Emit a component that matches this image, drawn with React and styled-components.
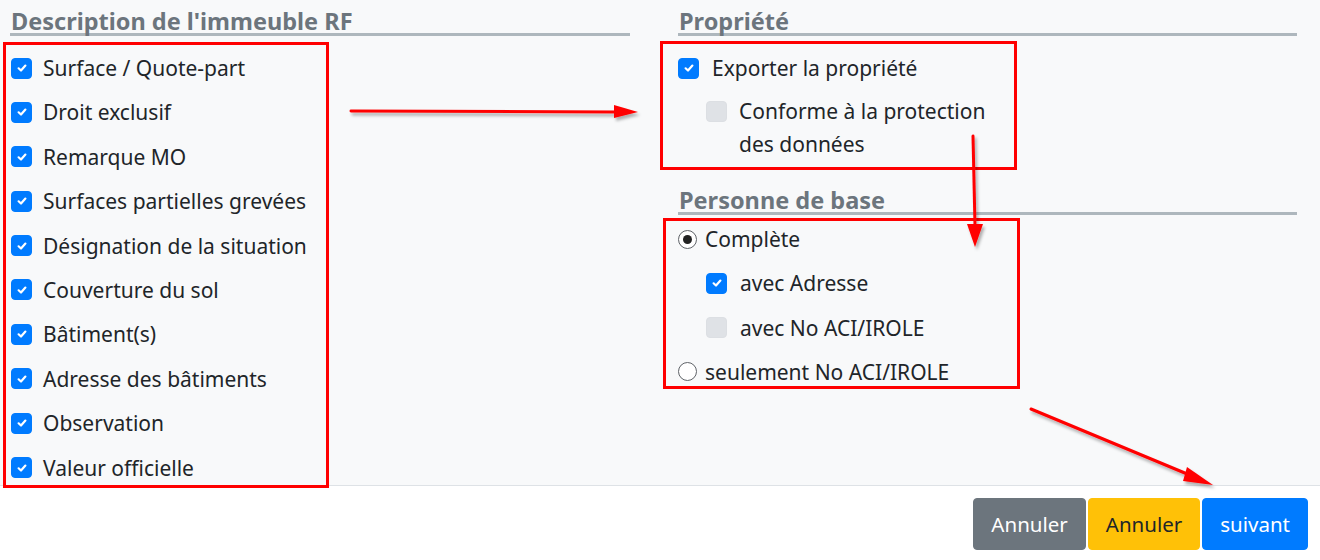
import styled, { createGlobalStyle } from "styled-components";

const GlobalStyle = createGlobalStyle`
  html, body {
    margin: 0;
    padding: 0;
    background: #ffffff;
    font-family: "Noto Sans", "Open Sans", Arial, sans-serif;
    color: #212529;
  }
`;

const LEFT_ITEMS = [
  "Surface / Quote-part",
  "Droit exclusif",
  "Remarque MO",
  "Surfaces partielles grevées",
  "Désignation de la situation",
  "Couverture du sol",
  "Bâtiment(s)",
  "Adresse des bâtiments",
  "Observation",
  "Valeur officielle",
];

const Check = ({ checked }) => (
  <CheckBox $checked={checked}>
    {checked && (
      <svg width="12" height="12" viewBox="0 0 12 12">
        <path d="M2.6 6.3 L5 8.5 L9.4 3.6" fill="none" stroke="#fff" strokeWidth="2.2" strokeLinecap="round" strokeLinejoin="round" />
      </svg>
    )}
  </CheckBox>
);

const App = () => {
  return (
    <>
      <GlobalStyle />
      <Page>
        <Main>
          <LeftColumn>
            <Heading $top={9}>Description de l'immeuble RF</Heading>
            <LeftBox>
              {LEFT_ITEMS.map((label) => (
                <Row key={label} $gap={11}>
                  <Check checked />
                  <Label>{label}</Label>
                </Row>
              ))}
            </LeftBox>
          </LeftColumn>

          <RightColumn>
            <Heading $top={9} $bottom={5}>Propriété</Heading>
            <RightBox $shift={18} $h={129} $pad="6px 15px 0 15px" $gap={9}>
              <Row $gap={13}>
                <Check checked />
                <Label>Exporter la propriété</Label>
              </Row>
              <SubRow>
                <Check />
                <WrapLabel>Conforme à la protection des données</WrapLabel>
              </SubRow>
            </RightBox>

            <Heading $top={18} $bottom={3}>Personne de base</Heading>
            <RightBox $shift={15} $h={171} $pad="0 12px" $gap={8.3}>
              <Row $gap={8}>
                <Radio $checked />
                <Label>Complète</Label>
              </Row>
              <Row $gap={13} $indent={28}>
                <Check checked />
                <Label>avec Adresse</Label>
              </Row>
              <Row $gap={13} $indent={28}>
                <Check />
                <Label>avec No ACI/IROLE</Label>
              </Row>
              <Row $gap={8}>
                <Radio />
                <Label>seulement No ACI/IROLE</Label>
              </Row>
            </RightBox>
          </RightColumn>

          <Arrows width="1320" height="560" viewBox="0 0 1320 560">
            <defs>
              <filter id="sh" x="-10%" y="-50%" width="120%" height="200%">
                <feDropShadow dx="2" dy="3" stdDeviation="1.5" floodColor="#000" floodOpacity="0.3" />
              </filter>
            </defs>
            <g filter="url(#sh)" fill="#ff0000" stroke="#ff0000">
              <line x1="351" y1="111" x2="616" y2="112" strokeWidth="3" strokeLinecap="round" />
              <polygon points="614,105 638,112 614,118" stroke="none" />
              <line x1="973" y1="136" x2="975" y2="226" strokeWidth="3" strokeLinecap="round" />
              <polygon points="967,224 983,224 975,247" stroke="none" />
              <line x1="1031" y1="409" x2="1192" y2="476" strokeWidth="3" strokeLinecap="round" />
              <polygon points="1187,467 1213,485 1183,481" stroke="none" />
            </g>
          </Arrows>
        </Main>

        <Footer>
          <Button $bg="#6c757d" $fg="#ffffff">Annuler</Button>
          <Button $bg="#ffc107" $fg="#212529">Annuler</Button>
          <Button $bg="#007bff" $fg="#ffffff">suivant</Button>
        </Footer>
      </Page>
    </>
  );
};

export default App;

// styles
const Page = styled.div`
  width: 1320px;
  height: 560px;
  display: flex;
  flex-direction: column;
  overflow: hidden;
`;

const Main = styled.div`
  position: relative;
  height: 486px;
  flex-shrink: 0;
  background: #f8f9fa;
  border-bottom: 1px solid #dee2e6;
  box-sizing: border-box;
  display: grid;
  grid-template-columns: 620px 619px;
  column-gap: 48px;
  padding: 0 0 0 10px;
`;

const LeftColumn = styled.div`
  display: flex;
  flex-direction: column;
`;

const RightColumn = styled.div`
  display: flex;
  flex-direction: column;
`;

const Heading = styled.h2`
  margin: ${(p) => p.$top}px 0 ${(p) => p.$bottom || 6}px 0;
  padding: 0 0 0 1px;
  font-size: 23.5px;
  line-height: 24px;
  font-weight: 700;
  color: #6c757d;
  border-bottom: 3px solid #aeb7bd;
  white-space: nowrap;
  flex-shrink: 0;
`;

const LeftBox = styled.div`
  border: 3px solid #ff0000;
  margin-left: -7px;
  width: 326px;
  height: 446px;
  padding: 5px 0 0 5px;
  box-sizing: border-box;
  display: flex;
  flex-direction: column;
  gap: 8.4px;
  flex-shrink: 0;
  position: relative;
  z-index: 1;
`;

const RightBox = styled.div`
  border: 3px solid #ff0000;
  margin-left: -${(p) => p.$shift}px;
  width: 357px;
  height: ${(p) => p.$h}px;
  padding: ${(p) => p.$pad};
  box-sizing: border-box;
  display: flex;
  flex-direction: column;
  gap: ${(p) => p.$gap}px;
  flex-shrink: 0;
`;

const Row = styled.div`
  display: flex;
  align-items: center;
  gap: ${(p) => p.$gap}px;
  height: 36px;
  flex-shrink: 0;
  padding-left: ${(p) => p.$indent || 0}px;
`;

const SubRow = styled.div`
  display: flex;
  align-items: flex-start;
  gap: 12px;
  padding-left: 28px;
  flex-shrink: 0;

  & > span:first-child {
    margin-top: 6px;
  }
`;

const Label = styled.span`
  font-size: 21px;
  line-height: 26px;
  color: #212529;
  white-space: nowrap;
`;

const WrapLabel = styled.span`
  font-size: 21px;
  line-height: 33px;
  color: #212529;
  width: 265px;
`;

const CheckBox = styled.span`
  width: 21px;
  height: 21px;
  flex-shrink: 0;
  border-radius: 4px;
  box-sizing: border-box;
  display: inline-flex;
  align-items: center;
  justify-content: center;
  background: ${(p) => (p.$checked ? "#007bff" : "#dfe2e6")};
  border: 1px solid ${(p) => (p.$checked ? "#007bff" : "#dcdfe3")};
`;

const Radio = styled.span`
  width: 19px;
  height: 19px;
  flex-shrink: 0;
  border-radius: 50%;
  box-sizing: border-box;
  border: 1.5px solid #5f6368;
  background: #fff;
  display: inline-flex;
  align-items: center;
  justify-content: center;

  &::after {
    content: "";
    width: 9px;
    height: 9px;
    border-radius: 50%;
    background: #222;
    display: ${(p) => (p.$checked ? "block" : "none")};
  }
`;

const Arrows = styled.svg`
  position: absolute;
  left: 0;
  top: 0;
  pointer-events: none;
  overflow: visible;
  z-index: 2;
`;

const Footer = styled.div`
  flex: 1;
  background: #ffffff;
  display: flex;
  justify-content: flex-end;
  align-items: flex-start;
  gap: 2px;
  padding: 12px 12px 0 0;
`;

const Button = styled.button`
  height: 52px;
  padding: 0 17px;
  min-width: 105px;
  border: 1px solid ${(p) => p.$bg};
  border-radius: 4px;
  background: ${(p) => p.$bg};
  color: ${(p) => p.$fg};
  font-family: "Noto Sans", "Open Sans", Arial, sans-serif;
  font-size: 20.5px;
  cursor: pointer;
`;
